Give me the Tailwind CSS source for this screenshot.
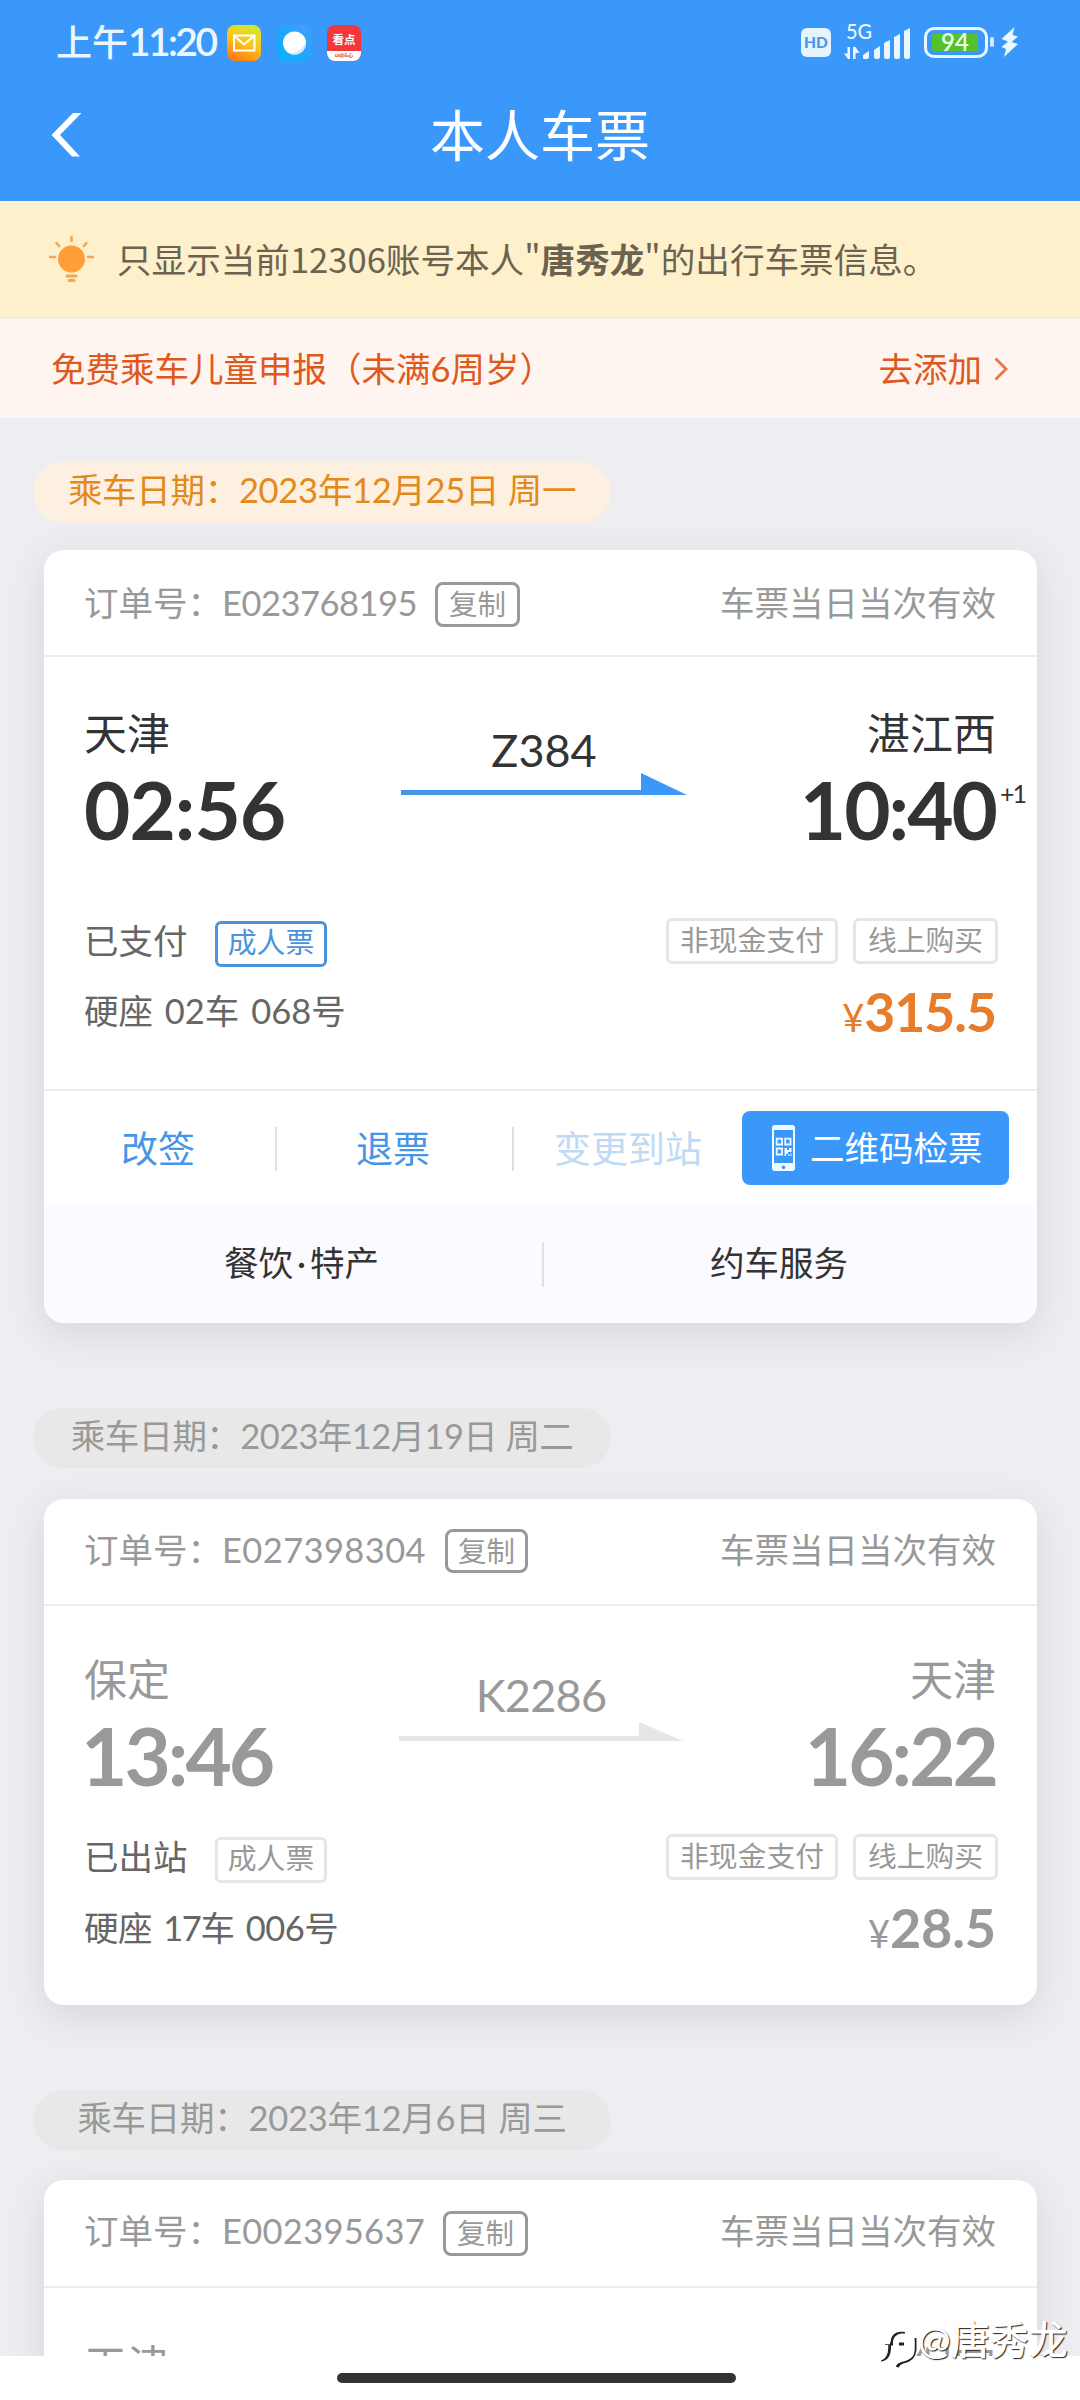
<!DOCTYPE html>
<html lang="zh-CN">
<head>
<meta charset="utf-8">
<title>本人车票</title>
<script src="https://cdn.jsdelivr.net/npm/@tailwindcss/browser@4"></script>
</head>
<body class="relative flex h-[2400px] w-[1080px] flex-col overflow-hidden bg-[#eeedf2] font-['Lato','Noto_Sans_CJK_SC',sans-serif] text-[34.5px] text-[#999]">

<header class="h-[201px] shrink-0 bg-[#3b98fb] text-white">
  <div class="flex h-[84px] items-center pl-[56px] pr-[62px]">
    <span class="-mt-[2px] w-[171px] whitespace-nowrap text-[36px] font-medium leading-[82px] text-[#eaf7ff]">上午<span class="text-[39px] font-semibold tracking-[-2.6px]">11:20</span></span>
    <svg class="mt-[1px] h-[36px] w-[34px]" viewBox="0 0 34 36">
      <defs><linearGradient id="mail" x1="0.7" y1="0" x2="0.3" y2="1"><stop offset="0" stop-color="#d3ea2c"/><stop offset="0.5" stop-color="#fdc31c"/><stop offset="1" stop-color="#ff7a12"/></linearGradient></defs>
      <rect width="34" height="36" rx="8" fill="url(#mail)"/>
      <path d="M7 10.500H27.500V25.500H7Z M7.500 11L17 19.500L27 11" fill="none" stroke="#fff" stroke-width="2"/>
    </svg>
    <svg class="ml-[16px] mt-[1px] h-[36px] w-[34px]" viewBox="0 0 34 36">
      <defs><linearGradient id="brw" x1="1" y1="0" x2="0" y2="1"><stop offset="0" stop-color="#4a9dfb"/><stop offset="0.5" stop-color="#1fa6fd"/><stop offset="1" stop-color="#04b4ff"/></linearGradient></defs>
      <rect width="34" height="36" rx="8" fill="url(#brw)"/>
      <circle cx="17.500" cy="18" r="11.500" fill="#fff"/>
      <path d="M29 16C27 24 20 28 13 28.500C21 32 30 26 29 16Z" fill="#cfe6fb"/>
    </svg>
    <div class="ml-[16px] mt-[1px] flex h-[36px] w-[34px] flex-col items-center overflow-hidden rounded-[8px] bg-[#f3373c]">
      <span class="h-[26px] whitespace-nowrap text-[11.500px] font-bold leading-[30px]">看点</span>
      <span class="h-[10px] w-full bg-white text-center text-[5px] font-bold leading-[9px] text-[#d33]">us@&amp;心</span>
    </div>
    <div class="ml-auto flex items-center">
      <span class="mt-[1px] flex h-[29px] w-[30px] items-center justify-center rounded-[6px] bg-[#e6f4ff] text-[15.500px] font-black leading-none text-[#4a97e8]">HD</span>
      <svg class="ml-[13px] h-[44px] w-[68px] overflow-visible" viewBox="0 0 68 44">
        <text x="2" y="18.500" font-family="Lato" font-size="21" font-weight="500" fill="#eaf7ff" textLength="26" lengthAdjust="spacingAndGlyphs">5G</text>
        <g fill="#eaf7ff">
          <path d="M3.500 27H6V39H4L0 33.500H3.500Z"/>
          <path d="M9 39V27H11.500L15.500 33H11.500V39Z"/>
          <path d="M19 38V35L25 31V36.500Q25 39 23 39H20Q19 39 19 38Z"/>
          <path d="M30 37V30L36 26V37Q36 39 34 39H32Q30 39 30 37Z"/>
          <path d="M40 37V23L46 20V37Q46 39 44 39H42Q40 39 40 37Z"/>
          <path d="M50 37V17L56 14V37Q56 39 54 39H52Q50 39 50 37Z"/>
          <path d="M60 37V11L66 8V37Q66 39 64 39H62Q60 39 60 37Z"/>
        </g>
      </svg>
      <div class="ml-[12px] flex h-[31px] w-[64px] items-center justify-center rounded-[10px] border-[3px] border-[#eaf7ff] p-[4px]">
        <span class="flex h-full w-[46px] -translate-x-[1px] items-center justify-center rounded-[2px] bg-[#55c22b] text-[24px] font-semibold leading-none text-[#eaffea]">94</span>
      </div>
      <i class="ml-[2px] h-[10px] w-[4px] rounded-[2px] bg-[#d5ecff]"></i>
      <svg class="ml-[7px] h-[30px] w-[17px]" viewBox="0 0 17 30"><path d="M13.500 0L0.500 12L7 14.500L0.500 20L5 22L3 30L17 17L10.500 15L17 9.500L11.500 8Z" fill="#eaf7ff"/></svg>
    </div>
  </div>
  <div class="grid h-[102px] grid-cols-[130px_1fr_130px] items-center">
    <svg class="ml-[51px] h-[44px] w-[31px]" viewBox="0 0 31 44"><path d="M22 0H30.500L9 22L29 43.500H21L0.500 22Z" fill="#fff"/></svg>
    <h1 class="text-center text-[55px] leading-[100px]">本人车票</h1>
  </div>
</header>

<section class="flex h-[118px] shrink-0 items-center border-b-2 border-[#f0ece6] bg-[#fef0cb] pl-[49px] font-['Noto_Sans_CJK_SC',sans-serif] text-[34.600px] text-[#6b6350]">
  <svg class="h-[46px] w-[45px]" viewBox="0 0 45 46">
    <circle cx="22.500" cy="23" r="13.500" fill="#ff9d38"/>
    <path d="M22.500 1V5 M7.500 7L10 10 M37.500 7L35 10 M1 21H6 M39 21H44" stroke="#f5a54c" stroke-width="2.500" stroke-linecap="round"/>
    <path d="M18 40H27 M20 44.500H25" stroke="#f5a54c" stroke-width="3" stroke-linecap="round"/>
  </svg>
  <p class="-mt-[2px] ml-[23px] whitespace-nowrap leading-[112px]">只显示当前12306账号本人"<b>唐秀龙</b>"的出行车票信息。</p>
</section>

<section class="flex h-[99px] shrink-0 items-center justify-between bg-[#fff5f0] pl-[51px] pr-[72px] leading-[99px] text-[#e0591c]">
  <span>免费乘车儿童申报（未满6周岁）</span>
  <span class="flex items-center">去添加<svg class="ml-[12px] h-[24px] w-[14px]" viewBox="0 0 14 24"><path d="M1.500 1.500L12 12L1.500 22.500" fill="none" stroke="#e87448" stroke-width="2.800"/></svg></span>
</section>

<main class="flex h-[1938px] shrink-0 flex-col overflow-hidden">
  <div class="ml-[33px] mt-[44px] h-[61px] w-[578px] shrink-0 rounded-full bg-[#fef0e0] text-center leading-[56px] tracking-[-0.300px] text-[#e28a1c]">乘车日期：2023年12月25日 周一</div>

  <article class="ml-[44px] mt-[27px] h-[773px] w-[993px] shrink-0 rounded-[20px] bg-white shadow-[0_10px_40px_rgba(0,0,0,0.1)]">
    <div class="flex h-[107px] items-center border-b-2 border-[#ededed] pl-[40px] pr-[41px] leading-[105px]">
      <span class="tracking-[-0.500px]"><span class="tracking-normal">订单号：</span>E023768195</span>
      <span class="ml-[18px] mt-[4px] flex h-[45px] w-[85px] items-center justify-center rounded-[8px] border-[3px] border-[#999] text-[28.500px]">复制</span>
      <span class="ml-auto">车票当日当次有效</span>
    </div>
    <div class="h-[434px] border-b-2 border-[#ededed] pl-[40px] pr-[41px] pt-[47px] text-[#666]">
      <div class="grid grid-cols-[317px_286px_309px] text-[43px] text-[#333]">
        <div>
          <p class="leading-[60px]">天津</p>
          <p class="mt-[5px] text-[80px] font-bold leading-[80px] tracking-[-1px]">02:56</p>
        </div>
        <div>
          <p class="mt-[16px] h-[53px] text-center text-[45px] leading-[60px]">Z384</p>
          <svg class="h-[22px] w-[286px]" viewBox="0 0 286 22"><path d="M0 17H240V22H0Z" fill="#4795e6"/><path d="M240 0L286 22H240Z" fill="#3b98fb"/></svg>
        </div>
        <div class="text-right">
          <p class="leading-[60px]">湛江西</p>
          <p class="relative mt-[5px] text-[80px] font-bold leading-[80px] tracking-[-2px]">10:40<span class="absolute left-full top-[12px] ml-[4px] text-[25px] font-normal leading-[25px] tracking-[-2px]">+1</span></p>
        </div>
      </div>
      <div class="mt-[69px] flex h-[46px] items-center text-[28.800px] text-[#999]">
        <span class="w-[131px] text-[34.500px] text-[#666]">已支付</span>
        <span class="mt-[5px] flex h-[46px] w-[112px] items-center justify-center rounded-[6px] border-[3px] border-[#4b93dc] pb-[2px] text-[#4b93dc]">成人票</span>
        <span class="ml-auto flex h-[46px] w-[172px] items-center justify-center rounded-[6px] border-[3px] border-[#e6e6e6]">非现金支付</span>
        <span class="-mr-[2px] ml-[15px] flex h-[46px] w-[145px] items-center justify-center rounded-[6px] border-[3px] border-[#e6e6e6]">线上购买</span>
      </div>
      <div class="mt-[17px] flex justify-between leading-[60px]">
        <span class="[word-spacing:3px]">硬座 02车 068号</span>
        <span class="text-[38px] text-[#e77c2b]">¥<b class="text-[53.500px] tracking-[-1px]">315.5</b></span>
      </div>
    </div>
    <div class="flex h-[115px] items-center text-[37px] text-[#4795e6]">
      <span class="w-[231px] pl-[77px]">改签</span>
      <i class="h-[44px] w-[2px] bg-[#dfe0e3]"></i>
      <span class="w-[235px] pl-[79px]">退票</span>
      <i class="h-[44px] w-[2px] bg-[#dfe0e3]"></i>
      <span class="w-[228px] pl-[40px] text-[#bfdaf5]">变更到站</span>
      <span class="mb-[1px] flex h-[74px] w-[267px] items-center rounded-[8px] bg-[#3b98fb] pl-[30px] text-[34.500px] text-white">
        <svg class="h-[46px] w-[23px]" viewBox="0 0 23 46">
          <path fill-rule="evenodd" d="M3 0H20Q23 0 23 3V43Q23 46 20 46H3Q0 46 0 43V3Q0 0 3 0ZM2 5V38H21V5ZM11.500 40.500a1.800 1.800 0 1 0 0.010 0Z" fill="#eefaff"/>
          <path d="M4.700 13.700H10V19.500H4.700Z M13.200 13.700H18.500V19.500H13.200Z M4.700 23.500H10V29.500H4.700Z" fill="none" stroke="#eefaff" stroke-width="1.800"/>
          <path d="M12.500 23H15V25H17V23H19.500V27H16V29H14V31H12.500ZM16 29.500H17.500V31H16ZM18.500 28.500H19.500V31H18.500Z" fill="#eefaff"/>
        </svg>
        <span class="ml-[15px]">二维码检票</span>
      </span>
    </div>
    <div class="flex h-[117px] items-center rounded-b-[20px] bg-[#fafaff] text-[#333]">
      <span class="-mt-[4px] w-[498px] pl-[180px]">餐饮<span class="mx-[4px]">·</span>特产</span>
      <i class="h-[45px] w-[2px] bg-[#e0e0e6]"></i>
      <span class="-mt-[4px] pl-[166px]">约车服务</span>
    </div>
  </article>

  <div class="ml-[33px] mt-[85px] h-[60px] w-[578px] shrink-0 rounded-full bg-[#e8e8e9] text-center leading-[56px] tracking-[-0.600px]">乘车日期：2023年12月19日 周二</div>

  <article class="ml-[44px] mt-[31px] h-[506px] w-[993px] shrink-0 rounded-[20px] bg-white shadow-[0_10px_40px_rgba(0,0,0,0.1)]">
    <div class="flex h-[107px] items-center border-b-2 border-[#ededed] pb-[4px] pl-[40px] pr-[41px] leading-[101px]">
      <span class="tracking-[0.400px]"><span class="tracking-normal">订单号：</span>E027398304</span>
      <span class="ml-[19px] mt-[3px] flex h-[44px] w-[83px] items-center justify-center rounded-[8px] border-[3px] border-[#999] text-[28.500px]">复制</span>
      <span class="ml-auto">车票当日当次有效</span>
    </div>
    <div class="pl-[40px] pr-[41px] pt-[44px]">
      <div class="grid grid-cols-[315px_284px_313px] text-[43px]">
        <div>
          <p class="leading-[60px]">保定</p>
          <p class="-ml-[3px] mt-[5px] text-[80px] font-bold leading-[80px] tracking-[-3px]">13:46</p>
        </div>
        <div>
          <p class="mt-[16px] h-[56px] text-center text-[45px] leading-[58px] tracking-[-0.700px]">K2286</p>
          <svg class="h-[19px] w-[284px]" viewBox="0 0 284 19"><path d="M0 14H240V19H0Z" fill="#e6e6e6"/><path d="M240 0L284 19H240Z" fill="#e6e6e6"/></svg>
        </div>
        <div class="text-right">
          <p class="leading-[60px]">天津</p>
          <p class="mt-[5px] text-[80px] font-bold leading-[80px] tracking-[-3px]">16:22</p>
        </div>
      </div>
      <div class="mt-[39px] flex h-[46px] items-center text-[28.800px]">
        <span class="w-[131px] text-[34.500px] text-[#666]">已出站</span>
        <span class="mt-[5px] flex h-[46px] w-[112px] items-center justify-center rounded-[6px] border-[3px] border-[#e6e6e6] pb-[2px]">成人票</span>
        <span class="ml-auto flex h-[46px] w-[172px] items-center justify-center rounded-[6px] border-[3px] border-[#e6e6e6]">非现金支付</span>
        <span class="-mr-[2px] ml-[15px] flex h-[46px] w-[145px] items-center justify-center rounded-[6px] border-[3px] border-[#e6e6e6]">线上购买</span>
      </div>
      <div class="mt-[18px] flex justify-between leading-[60px]">
        <span class="text-[#666] tracking-[-0.500px] [word-spacing:3px]">硬座 <span class="tracking-[-1.500px]">17</span>车 006号</span>
        <span class="text-[38px]">¥<b class="text-[54px] tracking-[-0.200px]">28.5</b></span>
      </div>
    </div>
  </article>

  <div class="ml-[33px] mt-[85px] h-[61px] w-[578px] shrink-0 rounded-full bg-[#e8e8e9] text-center leading-[55px] tracking-[-0.250px]">乘车日期：2023年12月6日 周三</div>

  <article class="ml-[44px] mt-[29px] h-[506px] w-[993px] shrink-0 rounded-[20px] bg-white shadow-[0_10px_40px_rgba(0,0,0,0.1)]">
    <div class="flex h-[108px] items-center border-b-2 border-[#ededed] pb-[4px] pl-[40px] pr-[41px] leading-[102px]">
      <span class="tracking-[0.300px]"><span class="tracking-normal">订单号：</span>E002395637</span>
      <span class="ml-[18px] mt-[4px] flex h-[45px] w-[85px] items-center justify-center rounded-[8px] border-[3px] border-[#999] text-[28.500px]">复制</span>
      <span class="ml-auto">车票当日当次有效</span>
    </div>
    <div class="flex justify-between pl-[40px] pr-[41px] pt-[48px] text-[43px] leading-[60px]">
      <span>天津</span><span>保定</span>
    </div>
  </article>
</main>

<footer class="flex h-[44px] shrink-0 justify-center bg-white pt-[17px]">
  <i class="mr-[7px] h-[10px] w-[399px] rounded-full bg-[#333]"></i>
</footer>

<div class="absolute left-[878px] top-[2308px] flex items-center text-[39px] leading-[48px] text-white [text-shadow:1px_1px_1px_#222]">
  <svg class="mt-[18px] h-[44px] w-[40px]" viewBox="0 0 40 44">
    <path d="M2 34Q11 33 10.500 19M6 18H14M12 18Q13 7 22 6H26M20 18H25M36 12V24Q35 34 24 36Q20 37 18 41" fill="none" stroke="#222" stroke-width="3" transform="translate(1,0)"/>
    <path d="M1 33Q9 32 8.500 19M3 16.500H12M10.500 17Q11 5 22 4H26Q35 6 35 14V23Q35 32 24 34Q19 35 16 39" fill="none" stroke="#fff" stroke-width="3.500"/>
  </svg>
  <span class="whitespace-nowrap font-medium">@唐秀龙</span>
</div>
</body>
</html>
